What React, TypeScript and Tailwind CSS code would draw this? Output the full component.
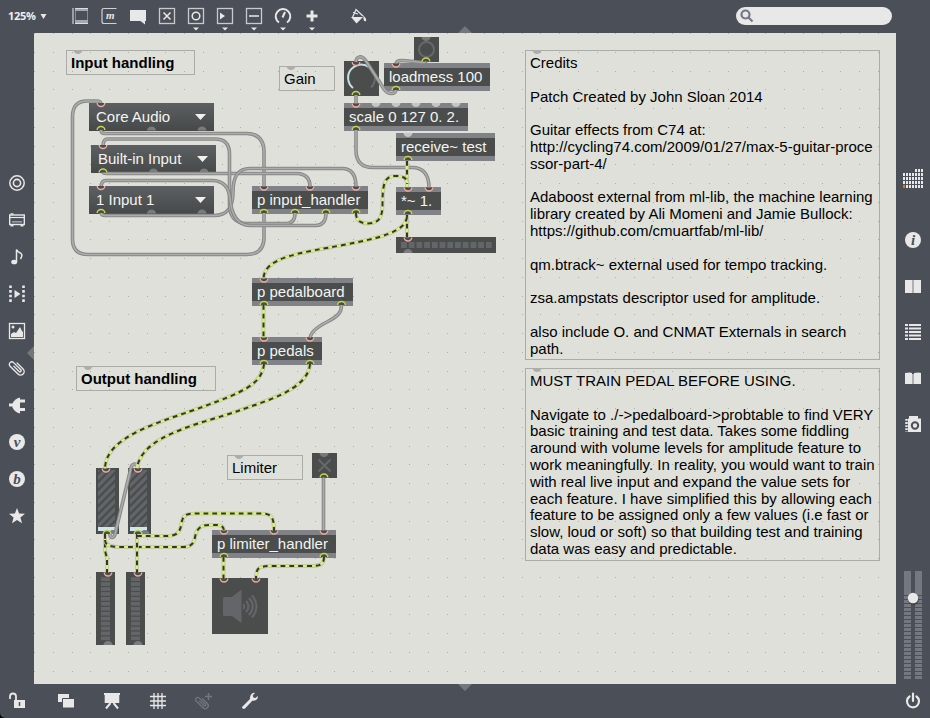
import React from "react";

type Kind = "object" | "menu";
interface PatchBox {
  x: number;
  y: number;
  w: number;
  text: string;
  kind: Kind;
}
interface Note {
  x: number;
  y: number;
  w: number;
  h: number;
  lines: string[];
  bold?: boolean;
}

const boxes: PatchBox[] = [
  { x: 89, y: 103, w: 125, text: "Core Audio", kind: "menu" },
  { x: 91, y: 145, w: 125, text: "Built-in Input", kind: "menu" },
  { x: 89, y: 186, w: 125, text: "1 Input 1", kind: "menu" },
  { x: 384, y: 63, w: 106, text: "loadmess 100", kind: "object" },
  { x: 344, y: 103, w: 124, text: "scale 0 127 0. 2.", kind: "object" },
  { x: 396, y: 133, w: 99, text: "receive~ test", kind: "object" },
  { x: 396, y: 187, w: 45, text: "*~ 1.", kind: "object" },
  { x: 252, y: 186, w: 116, text: "p input_handler", kind: "object" },
  { x: 252, y: 278, w: 101, text: "p pedalboard", kind: "object" },
  { x: 252, y: 337, w: 70, text: "p pedals", kind: "object" },
  { x: 212, y: 530, w: 124, text: "p limiter_handler", kind: "object" },
];

const notes: Note[] = [
  { x: 66, y: 50, w: 129, h: 25, lines: ["Input handling"], bold: true },
  { x: 279, y: 66, w: 56, h: 25, lines: ["Gain"] },
  { x: 76, y: 366, w: 140, h: 25, lines: ["Output handling"], bold: true },
  { x: 227, y: 455, w: 76, h: 25, lines: ["Limiter"] },
  {
    x: 525, y: 50, w: 355, h: 310,
    lines: [
      "Credits", "", "Patch Created by John Sloan 2014", "", "Guitar effects from C74 at:",
      "http://cycling74.com/2009/01/27/max-5-guitar-proce", "ssor-part-4/", "",
      "Adaboost external from ml-lib, the machine learning",
      "library created by Ali Momeni and Jamie Bullock:", "https://github.com/cmuartfab/ml-lib/", "",
      "qm.btrack~ external used for tempo tracking.", "",
      "zsa.ampstats descriptor used for amplitude.", "",
      "also include O. and CNMAT Externals in search", "path.",
    ],
  },
  {
    x: 525, y: 368, w: 355, h: 193,
    lines: [
      "MUST TRAIN PEDAL BEFORE USING.", "", "Navigate to ./->pedalboard->probtable to find VERY",
      "basic training and test data. Takes some fiddling", "around with volume levels for amplitude feature to",
      "work meaningfully. In reality, you would want to train", "with real live input and expand the value sets for",
      "each feature. I have simplified this by allowing each", "feature to be assigned only a few values (i.e fast or",
      "slow, loud or soft) so that building test and training", "data was easy and predictable.",
    ],
  },
];

const controlCords = [
  "M264 213V237Q264 254.5 247 254.5H88Q72.5 254.5 72.5 239V117Q72.5 101 87 101H96Q101 101 101 104",
  "M101 130Q101 133.5 105 133.5H247Q264 134 264 152V187",
  "M103 172Q103 173.5 107 173.5H297Q310 174 310 187",
  "M101 212Q101 215.5 105 215.5H214C228 215.5 233 207 233 192C233 176 238 168.5 250 168.5H342Q356 168.5 356 187",
  "M103 146Q103 139 108 139H215Q229.5 139 229.5 154V205Q230 223 247 223.5H287Q295 223 295 213",
  "M101 188Q101 180.5 106 180.5H213Q228 181 230 198Q232 225 250 225.5H316Q326 225 326 213",
  "M426 61C426 64 415 61 409 61C400 60 396 60 396 65",
  "M396 89C396 95 388 95 384 89L366 61C362 55.500 356 55 356 63",
  "M356 94V105",
  "M356 130V150Q356 167.500 373 167.500H412Q429 167.500 429 188",
  "M341.500 305C341.500 313 338 316 327 322C315 328 310 333 310 339",
  "M110 533C109 539 115 540 116 530L130 472C131 462 138 462 138 469",
  "M323.500 477V531",
];

const signalCords = [
  "M407 161V188",
  "M356 213C356 222 362 223.500 368 223.500C378 223.500 382.500 218 382.500 205C382.500 185 384 176 395 176C404 176 407 178 407 184",
  "M407 215V238",
  "M407 217C405 232 380 238 343 245C300 253 264 257 263.500 279",
  "M263.500 305V338",
  "M264 364C262 385 240 393 205 406C165 421 105 435 105 469",
  "M310 364C308 390 265 401 238 411C200 424 142 435 137 468",
  "M105 534V551L107 558V573",
  "M105 540C105 546 112 547 120 547H183C192 547 194 543 195.500 535C198 525 205 525 212 525C221 525 224 525 224 532",
  "M137 534V573",
  "M137 536H168C179 535.500 180.500 530 181.500 523C183 514 188 513.500 195 513.500H260C271 513.500 274 516 274 531",
  "M223.500 557V579",
  "M324 557C324 565 320 566 308 566H270C258 566.500 256 568 256 579",
];

const inlets: [number, number][] = [
  [101, 103], [103, 145], [101, 186], [356, 62], [396, 63.5], [356, 103.5], [408, 187.5], [429, 187.5],
  [408, 237.5], [264, 186.5], [310, 186.5], [356, 186.5], [264, 278.5], [264, 337.5], [310, 337.5],
  [224, 530.5], [274, 530.5], [324, 530.5], [224, 578.5], [256, 578.5], [106, 468.5], [138, 468.5],
  [108, 572.5], [138, 572.5],
];
const outlets: [number, number][] = [
  [101, 130], [103, 172.5], [101, 213], [356, 95], [396, 90], [426, 61.5], [356, 130], [408, 160],
  [408, 214], [264, 213], [295, 213], [326, 213], [356, 213], [264, 305], [341.5, 305], [264, 364],
  [310, 364], [107, 534], [138, 534], [224, 557], [324, 557], [324, 477.5],
];
const idleInlets: [number, number, string][] = [
  [376, 103, "#c4c5c4"], [396, 103, "#c4c5c4"], [416, 103, "#c4c5c4"], [436, 103, "#c4c5c4"],
  [456, 103, "#c4c5c4"], [408, 133, "#c4c5c4"], [426, 37, "#777979"], [324, 453, "#777979"],
  [78, 50, "#adaeab"], [291, 66, "#adaeab"], [88, 366, "#adaeab"], [239, 455, "#adaeab"],
  [537, 50, "#adaeab"], [537, 368, "#adaeab"],
];
const idleOutlets: [number, number][] = [
  [151.5, 130.5], [202, 130.5], [153.5, 172.5], [204, 172.5], [151.5, 213.5], [202, 213.5],
  [408, 253], [108, 645], [138, 645], [113, 534], [145, 534],
];

const gridX = Array.from({ length: 46 }, (_, i) => Math.round(34 + i * 18.75));
const gridY = Array.from({ length: 35 }, (_, i) => Math.round(33 + i * 18.75));
const gridPath = gridY.map((y) => gridX.map((x) => `M${x} ${y}h1v1h-1z`).join("")).join("");

function range(n: number) {
  return Array.from({ length: n }, (_, i) => i);
}

function PatchObject({ box }: { box: PatchBox }) {
  if (box.kind === "menu") {
    return (
      <div
        className="absolute flex h-[28px] items-center bg-linear-to-b from-[#5d6063] to-[#464948] pl-[7px] pr-[8px] text-[#f4f4f4]"
        style={{ left: box.x, top: box.y, width: box.w }}
      >
        <span className="grow">{box.text}</span>
        <svg width="11" height="6" viewBox="0 0 11 6"><path d="M0 0H11L5.5 6Z" fill="#f0f0f0" /></svg>
      </div>
    );
  }
  return (
    <div
      className="absolute flex h-[28px] items-center border-y-[5px] border-[#818188] bg-[#4a4d4b] pl-[5px] text-[#f4f4f4]"
      style={{ left: box.x, top: box.y, width: box.w }}
    >
      {box.text}
    </div>
  );
}

function Comment({ note }: { note: Note }) {
  return (
    <div
      className={`absolute border border-[#aaaca7] pl-[4px] pt-[4px] text-black ${note.bold ? "font-bold" : ""}`}
      style={{ left: note.x, top: note.y, width: note.w, height: note.h }}
    >
      {note.lines.map((line, i) => (
        <div key={i} className="h-[16.8px] leading-[16.8px]">{line}</div>
      ))}
    </div>
  );
}

function Patcher() {
  return (
    <div className="absolute -left-[34px] -top-[33px] h-[718px] w-[930px] whitespace-pre text-[15px] leading-[18px]">
      <svg className="absolute inset-0" width="930" height="718"><path d={gridPath} fill="#adafaa" /></svg>
      {notes.map((n) => <Comment key={n.lines[0]} note={n} />)}
      {boxes.map((b) => <PatchObject key={b.text} box={b} />)}
      <svg className="absolute inset-0" width="930" height="718" fill="none">
        <defs>
          <pattern id="stripes" width="8" height="8" patternUnits="userSpaceOnUse">
            <rect width="8" height="8" fill="#4b4e4e" />
            <path d="M-2 10L10 -2M-2 2L2 -2M6 10L10 6" stroke="#636669" strokeWidth="3.1" />
          </pattern>
        </defs>
        <g fill="#4a4d4b">
          <path d="M344 61h35v35h-35zM414 37h25v25h-25zM312 453h25v25h-25zM396 237h100v16h-100z" />
          <path d="M212 578h56v56h-56zM96 572h19v73h-19zM126 572h19v73h-19zM96 468h23v66h-23zM128 468h23v66h-23z" />
        </g>
        <path d="M353 88A13 13 0 1 1 369.500 67.500" stroke="#c6dfe5" strokeWidth="2" />
        <path d="M369.500 67.500A13 13 0 0 1 371 87.500" stroke="#686b6c" strokeWidth="2" />
        <circle cx="426.500" cy="49.500" r="7.500" stroke="#66696a" strokeWidth="2" />
        <path d="M318.500 459.500l12 12M330.500 459.500l-12 12" stroke="#66696a" strokeWidth="2" />
        <g fill="#636669">
          {range(12).map((i) => <rect key={i} x={401 + i * 7.72} y="242" width="5.8" height="6" />)}
          {range(13).map((i) => <rect key={i} x="101" y={577.3 + i * 4.93} width="9" height="3.7" />)}
          {range(13).map((i) => <rect key={i} x="131" y={577.3 + i * 4.93} width="9" height="3.7" />)}
          <path d="M224.500 597h7.500l9.500-7.500v33.500l-9.500-7h-7.500q-1.500 0-1.500-1.500v-16q0-1.500 1.500-1.500z" />
          <path d="M243 603q5 3.500 0 7z" />
        </g>
        <path d="M246 601q5 5.500 0 11M249 598q7.500 8.500 0 17M252 595.500q9 11 0 22" stroke="#636669" strokeWidth="2.200" />
        <path d="M98 470h17v57h-17zM130 470h17v57h-17z" fill="url(#stripes)" />
        <path d="M98 527h17v4h-17zM130 527h17v4h-17z" fill="#cee5ea" />
        {idleOutlets.map(([x, y]) => (
          <path key={`${x}-${y}`} d={`M${x - 4.5} ${y}a4.500 4 0 0 1 9 0z`} fill="#797b7c" />
        ))}
        {idleInlets.map(([x, y, c]) => (
          <path key={`${x}-${y}`} d={`M${x - 4.5} ${y}a4.500 4 0 0 0 9 0z`} fill={c} />
        ))}
        {controlCords.map((d) => (
          <g key={d}>
            <path d={d} stroke="#868686" strokeWidth="3.600" />
            <path d={d} stroke="#acacab" strokeWidth="1.600" />
          </g>
        ))}
        {signalCords.map((d) => (
          <g key={d}>
            <path d={d} stroke="#b4b6ac" strokeWidth="3.700" />
            <path d={d} stroke="#d6f37a" strokeWidth="2.500" />
            <path d={d} stroke="#35381f" strokeWidth="2" strokeDasharray="4.8 4" />
          </g>
        ))}
        {inlets.map(([x, y]) => (
          <path key={`${x}-${y}`} d={`M${x - 3.8} ${y}a3.800 3.500 0 0 0 7.600 0`} fill="#4a4d4b" stroke="#f0aaa0" strokeWidth="1.400" />
        ))}
        {outlets.map(([x, y]) => (
          <path key={`${x}-${y}`} d={`M${x - 3.8} ${y}a3.800 3.500 0 0 1 7.600 0`} fill="#4a4d4b" stroke="#c6d64c" strokeWidth="1.400" />
        ))}
      </svg>
    </div>
  );
}

function Icon({ children, w = 18, h = 18, box = "0 0 18 18" }: { children: React.ReactNode; w?: number; h?: number; box?: string }) {
  return (
    <svg width={w} height={h} viewBox={box} fill="none" stroke="#e8e8e8" className="block shrink-0 overflow-visible">
      {children}
    </svg>
  );
}

const clip = "M12.600 5v9a3.600 3.600 0 0 1-7.200 0V2.800a2.500 2.500 0 0 1 5 0V13a1.200 1.200 0 0 1-2.400 0V5";
const caret = <path d="M6 20.500h6l-3 3z" fill="#e8e8e8" stroke="none" />;
const frame = <rect x="1.500" y="1.500" width="15" height="15" stroke="#c9cacc" strokeWidth="1.300" />;

function TopBar() {
  return (
    <header className="flex h-[33px] shrink-0 items-center pb-px pl-[8px] pr-[38px]">
      <span className="w-[32px] font-['Open_Sans',sans-serif] text-[11px] font-bold leading-[16px] tracking-[-0.3px] text-[#eeeeee]">125%</span>
      <svg width="7" height="5" viewBox="0 0 7 5" className="mr-[24px]"><path d="M0.500 0h6L3.500 5z" fill="#e8e8e8" /></svg>
      <div className="flex items-center gap-[11px]">
        <Icon>
          <path d="M4.500 4v9M16.500 4v9" stroke="#898d93" />
          <path d="M2 1v16" stroke="#c9cacc" strokeWidth="1.300" />
          <path d="M4 2.500h13M4 14.500h13" stroke="#a5a8ac" strokeWidth="3" />
          <path d="M4 1.500h13M4 16.500h13" stroke="#dcdddd" />
        </Icon>
        <Icon>
          <path d="M16.500 1.500H4Q2 1.500 2 3.500v11q0 2 2 2h12.500" stroke="#d0d1d3" strokeWidth="1.200" />
          <text x="6" y="12" fill="#e8e8e8" stroke="none" className="font-['Liberation_Serif'] text-[11px] font-bold italic">m</text>
        </Icon>
        <Icon><path d="M1 3h16v11h-1v3.500L11.500 14H1z" fill="#e8e8e8" stroke="none" /></Icon>
        <Icon>{frame}<path d="M5.500 5.500l7 7M12.500 5.500l-7 7" strokeWidth="1.500" /></Icon>
        <Icon>{frame}<circle cx="9" cy="9" r="3.800" strokeWidth="1.500" />{caret}</Icon>
        <Icon>{frame}<path d="M4 5.500l5 3.500-5 3.500z" fill="#e8e8e8" stroke="none" />{caret}</Icon>
        <Icon>{frame}<path d="M4 9h10" strokeWidth="1.500" />{caret}</Icon>
        <Icon><path d="M5 15.500A7.300 7.300 0 1 1 13 15.500M8.500 10.500L11 5" strokeWidth="2" />{caret}</Icon>
        <Icon><path d="M9 3.500v11M3.500 9h11" strokeWidth="3" />{caret}</Icon>
      </div>
      <div className="ml-[28px]">
        <Icon>
          <path d="M3.500 10.500L7 2.500l7 6.500M4 5.500l5 1.500" strokeWidth="1.200" />
          <path d="M2 10h12l-6.500 6.500zM13.500 8Q19 12 16.500 14.500Q14 14 14.500 10z" fill="#e8e8e8" stroke="none" />
        </Icon>
      </div>
      <div className="ml-auto flex h-[18px] w-[156px] items-center rounded-full bg-[#e8e8e8] pl-[4px]">
        <svg width="14" height="14" viewBox="0 0 14 14" fill="none" stroke="#717783" strokeWidth="2.200">
          <circle cx="5.500" cy="5.500" r="4" /><path d="M8.500 8.500l4 4" />
        </svg>
      </div>
    </header>
  );
}

function LetterBadge({ letter }: { letter: string }) {
  return (
    <Icon>
      <circle cx="9" cy="9" r="8" fill="#e8e8e8" stroke="none" />
      <text x="9" y="13.500" textAnchor="middle" fill="#4b4f57" stroke="none" className="font-['Liberation_Serif'] text-[15px] font-bold italic">{letter}</text>
    </Icon>
  );
}

function LeftBar() {
  return (
    <nav className="flex w-[34px] shrink-0 flex-col items-center gap-[19px] pt-[140.5px]">
      <Icon><circle cx="9" cy="9" r="7.200" strokeWidth="1.500" /><circle cx="9" cy="9" r="3.600" strokeWidth="1.600" /></Icon>
      <Icon>
        <rect x="1.700" y="4" width="14.600" height="9.500" strokeWidth="1.400" />
        <path d="M2 6.500h14" strokeWidth="1.200" /><path d="M4 10.800h10" stroke="#9a9da2" strokeWidth="1.600" />
        <path d="M2.500 3h3M2.500 14.800h3M12.500 14.800h3" strokeWidth="1.600" />
      </Icon>
      <Icon>
        <path d="M8.500 14V1.500Q9.500 4 13 5.500Q15 7 12.500 11" strokeWidth="1.500" />
        <ellipse cx="6.200" cy="14" rx="3" ry="2.300" fill="#e8e8e8" stroke="none" />
      </Icon>
      <Icon>
        <path d="M2.500 0.500v17M15.500 0.500v17" strokeWidth="2.600" strokeDasharray="2.600 2" />
        <path d="M6.500 5l6 4-6 4z" fill="#e8e8e8" stroke="none" />
      </Icon>
      <Icon>
        <rect x="1.500" y="1.500" width="15" height="15" strokeWidth="1.300" />
        <path d="M3 15v-3l3-2 2 1 4-6 2 4 1 1v5z" fill="#e8e8e8" stroke="none" /><circle cx="5" cy="5" r="1.500" fill="#e8e8e8" stroke="none" />
      </Icon>
      <Icon><path d={clip} strokeWidth="1.400" transform="rotate(-45 9 9)" /></Icon>
      <Icon>
        <path d="M1 9h4M11 5h6M11 13.500h6" strokeWidth="3" />
        <path d="M12 1.500v16Q7 16.500 4.500 11.500v-4Q7 2.500 12 1.500z" fill="#e8e8e8" stroke="none" />
      </Icon>
      <LetterBadge letter="v" />
      <LetterBadge letter="b" />
      <Icon><path d="M9 1l2.100 5.500 5.900.3-4.600 3.700 1.600 5.700L9 13l-5 3.200 1.600-5.700L1 6.800l5.900-.3z" fill="#e8e8e8" stroke="none" /></Icon>
    </nav>
  );
}

function RightBar() {
  return (
    <aside className="flex w-[34px] shrink-0 flex-col items-center pt-[135px]">
      <Icon w={20} h={20} box="0 0 20 20">
        <g stroke="none" fill="#e8e8e8">
          {range(35).map((i) => {
            const col = i % 7;
            const row = Math.floor(i / 7);
            return row === 0 && col < 4 ? null : (
              <rect key={i} x={col * 3} y={1 + row * 4} width="2" height="3" fill={row === 4 && col === 0 ? "#e8750c" : "#e8e8e8"} />
            );
          })}
        </g>
      </Icon>
      <div className="mt-[42.5px] flex flex-col gap-[28px]">
        <LetterBadge letter="i" />
        <Icon><path d="M1 3h7v13H1zM10 3h7v13h-7z" fill="#e8e8e8" stroke="none" /><path d="M9 3v13" stroke="#adb0b4" strokeWidth="2" /></Icon>
        <Icon><path d="M1 2h16M1 5.500h16M1 9h16M1 12.500h16M1 16h16" strokeWidth="1.800" /><path d="M4.500 1v16" stroke="#4b4f57" /></Icon>
        <Icon><path d="M1 4q5-1 7 0v11H1zM10 4q5-1 7 0v11h-7z" fill="#e8e8e8" stroke="none" /><path d="M9 5v10" stroke="#adb0b4" strokeWidth="2" /></Icon>
        <Icon>
          <path d="M5 1h9v2.500h3V17H4V3.500h1z" fill="#e8e8e8" stroke="none" />
          <path d="M2.500 4v13" strokeWidth="2.500" strokeDasharray="1.800 1.300" />
          <circle cx="11" cy="10.500" r="3.200" stroke="#4b4f57" strokeWidth="2" />
        </Icon>
      </div>
      <div className="mt-auto mb-[3px]">
        <Icon w={20} h={110} box="0 0 20 110">
          <path d="M1 0h7v24H1zM12 0h7v24h-7z" fill="#74787f" stroke="none" />
          <path d="M4.500 25v83M15.500 25v83" stroke="#74787f" strokeWidth="7" strokeDasharray="3 1" />
          <circle cx="10.500" cy="28.500" r="5.500" fill="#33363c" stroke="none" opacity="0.5" />
          <circle cx="10" cy="27" r="5.200" fill="#e8e8e8" stroke="none" />
        </Icon>
      </div>
    </aside>
  );
}

function BottomBar() {
  return (
    <footer className="flex h-[34px] shrink-0 items-center pl-[8px] pr-[8px]">
      <Icon>
        <path d="M2 7V4.500A3 3 0 0 1 8 4.500V9" strokeWidth="1.800" />
        <path d="M6 8h11v8H6z" fill="#e8e8e8" stroke="none" /><path d="M11.500 10v4" stroke="#4b4f57" strokeWidth="1.500" />
      </Icon>
      <div className="ml-[30.5px] flex items-center gap-[28px]">
        <Icon>
          <path d="M1 2h11v8H1z" fill="#e8e8e8" stroke="none" />
          <path d="M5.500 6.500h12v9.500h-12z" fill="#e8e8e8" stroke="#4b4f57" />
        </Icon>
        <Icon>
          <path d="M1 1h16v2h-.700v8H1.700V3H1z" fill="#e8e8e8" stroke="none" />
          <path d="M7.500 11l-4.500 5.500M10.500 11l4.500 5.500" strokeWidth="2" />
        </Icon>
        <Icon><path d="M5 1v16M9 1v16M13 1v16M1 4.500h16M1 9h16M1 13.500h16" strokeWidth="1.300" /></Icon>
        <Icon>
          <g stroke="#73777e"><path d={clip} strokeWidth="1.500" transform="translate(-0.500 3) scale(.85) rotate(-45 9 9)" /><path d="M13.500 1v7M10 4.500h7" strokeWidth="1.500" /></g>
        </Icon>
        <Icon>
          <path d="M1.500 14.500L9 7Q8.500 3.500 11 1.500q1.500-1 3-.500L11.800 3.300l.5 2.200 2.200.5L16.700 4q.5 1.500-.700 3.200-2 2-4.700 1.500L4 16.500Q2.500 17.500 1.500 16.200T1.500 14.500z" fill="#e8e8e8" stroke="none" />
        </Icon>
      </div>
      <div className="ml-auto">
        <Icon><path d="M5.500 4.500A6 6 0 1 0 12.500 4.500M9 1.500v7.500" strokeWidth="2.200" strokeLinecap="round" /></Icon>
      </div>
    </footer>
  );
}

export default function App() {
  return (
    <div className="h-[718px] w-[930px] overflow-hidden bg-black font-['Liberation_Sans',sans-serif]">
      <div className="relative flex h-full flex-col rounded-bl-[5px] bg-[#4b4f57]">
        <TopBar />
        <div className="flex min-h-0 grow">
          <LeftBar />
          <main className="relative grow overflow-hidden bg-[#dfe0da]"><Patcher /></main>
          <RightBar />
        </div>
        <BottomBar />
        <svg className="pointer-events-none absolute inset-0" width="930" height="718" fill="#73767b">
          <path d="M458 33l7-7 7 7zM458 684l7 7 7-7zM34 346l-7 7 7 7z" />
        </svg>
      </div>
    </div>
  );
}
